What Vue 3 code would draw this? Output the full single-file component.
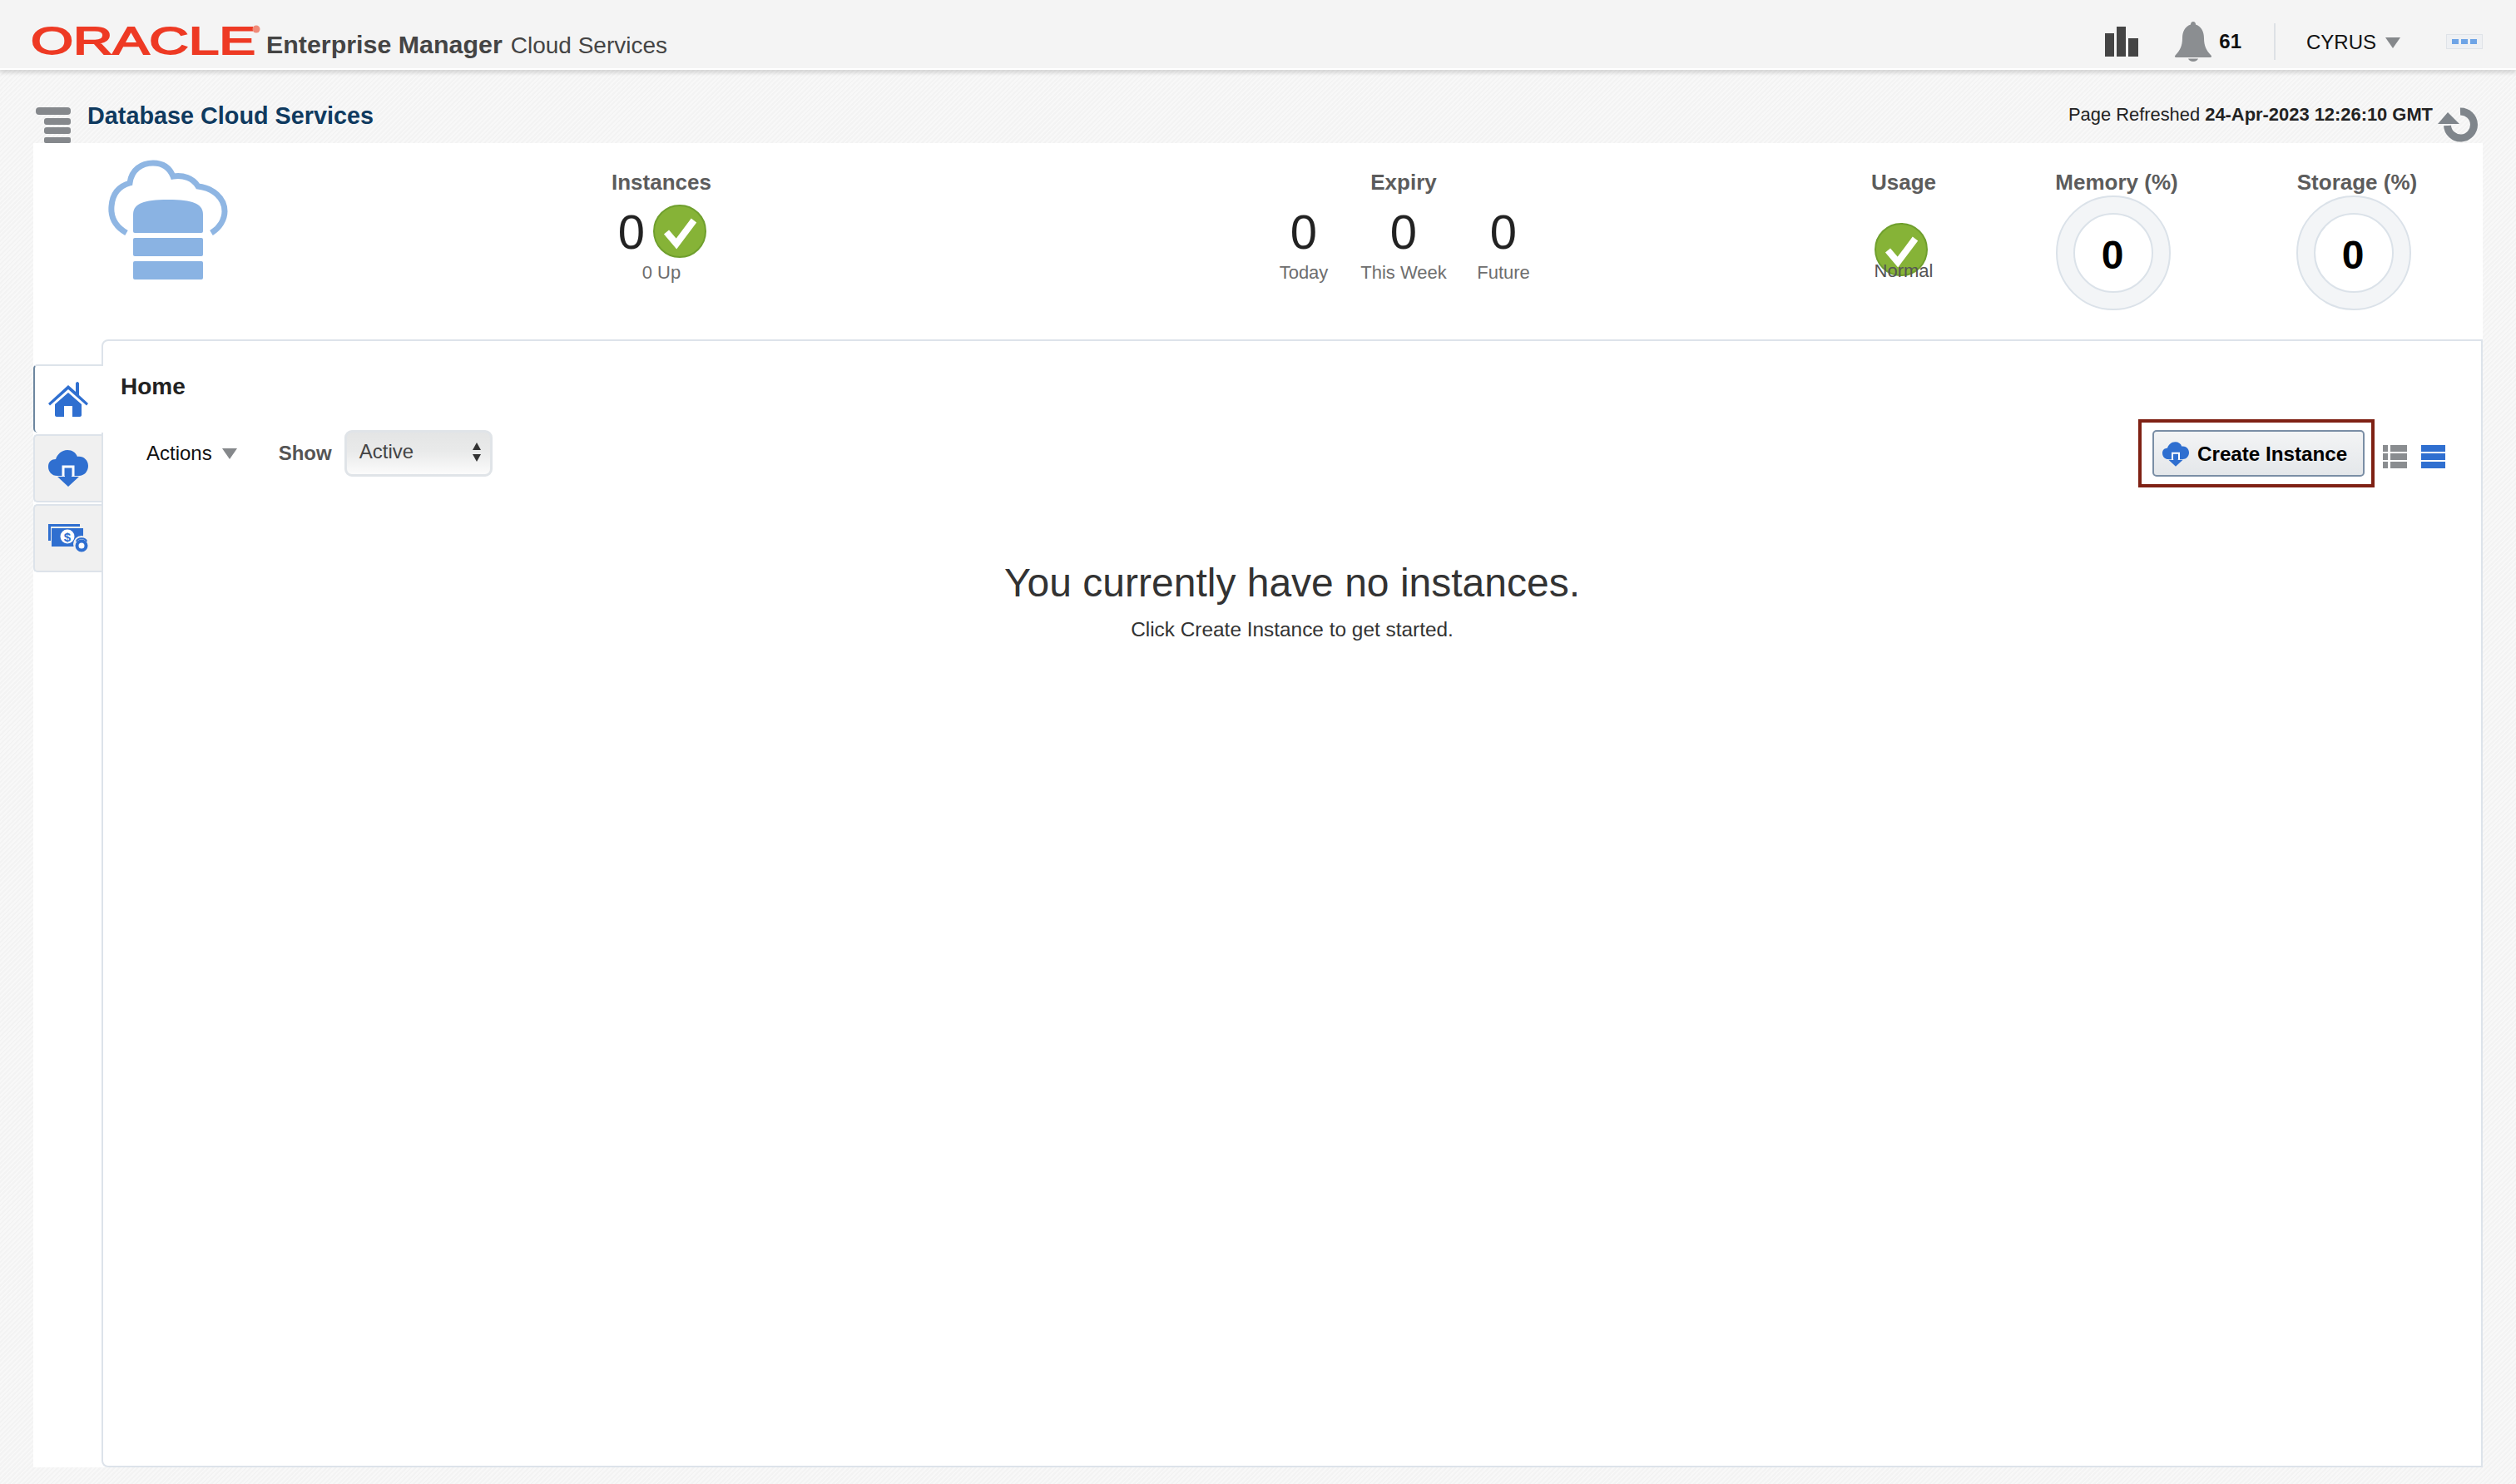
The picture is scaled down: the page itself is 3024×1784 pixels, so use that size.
<template>
  <div class="page">
    <header class="topbar">
      <svg class="oracle" width="280" height="56" viewBox="0 0 280 56" role="img" aria-label="Oracle">
        <text x="1" y="43.500" textLength="270" lengthAdjust="spacingAndGlyphs" class="oracle-word">ORACLE</text>
        <circle cx="272" cy="14" r="4.500" fill="#f08a78" />
      </svg>
      <div class="product">
        <b>Enterprise Manager</b>
        <span>Cloud Services</span>
      </div>
      <div class="top-right">
        <svg class="bars" width="40" height="36" viewBox="0 0 40 36">
          <rect x="0" y="8" width="11" height="28" />
          <rect x="14" y="0" width="11" height="36" />
          <rect x="28" y="14" width="12" height="22" />
        </svg>
        <svg class="bell" width="46" height="48" viewBox="0 0 46 48">
          <path d="M23 0c2 0 3 1.500 3 3.500C33 6 36 12 36 20c0 9 3 15 8 20 2 2 1 3-1 3H3c-2 0-3-1-1-3 5-5 8-11 8-20 0-8 3-14 10-16.500C20 1.500 21 0 23 0z" />
          <path d="M17 44.500h12c-1 2-3 3.500-6 3.500s-5-1.500-6-3.500z" />
        </svg>
        <b class="count">61</b>
        <span class="divider"></span>
        <span class="user">CYRUS</span>
        <span class="caret user-caret"></span>
        <span class="dots"><i></i><i></i><i></i></span>
      </div>
    </header>

    <div class="title-row">
      <svg class="menu" width="42" height="44" viewBox="0 0 42 44">
        <rect x="0" y="1" width="42" height="9" rx="4" />
        <rect x="10" y="14" width="32" height="8" rx="3" />
        <rect x="10" y="25" width="32" height="8" rx="3" />
        <rect x="10" y="37" width="32" height="7" rx="2" />
      </svg>
      <h1>Database Cloud Services</h1>
      <div class="refreshed">Page Refreshed <b>24-Apr-2023 12:26:10 GMT</b></div>
      <svg class="refresh" width="48" height="44" viewBox="0 0 48 44">
        <path d="M27 6A16 16 0 1 1 11.500 23" fill="none" stroke="#7f858b" stroke-width="9" />
        <path d="M0 21 12 7l14 14z" fill="#7f858b" />
      </svg>
    </div>

    <main class="panel">
      <section class="summary">
        <svg class="cloud" width="144" height="144" viewBox="0 0 144 144">
          <path d="M22 88C8 80 3 68 4 56 5 42 12 32 26 28 28 12 40 4 54 4c12 0 20 6 24 16 12-2 24 2 30 12 18 2 32 14 32 30 0 10-6 20-16 26" fill="none" stroke="#8fb6e3" stroke-width="7" />
          <path d="M30 86V66c0-12 10-18 42-18s42 6 42 18v20a2 2 0 0 1-2 2H32a2 2 0 0 1-2-2z" fill="#8ab3e3" />
          <rect x="30" y="94" width="84" height="22" rx="2" fill="#8ab3e3" />
          <rect x="30" y="122" width="84" height="22" rx="2" fill="#8ab3e3" />
        </svg>

        <div class="metric instances">
          <h3>Instances</h3>
          <div class="metric-row">
            <span class="big">0</span>
            <svg class="check" width="64" height="64" viewBox="0 0 64 64">
              <circle cx="32" cy="32" r="31" fill="#86b337" stroke="#6f9f2d" stroke-width="2" />
              <path d="M16 33l12 14 21-28" fill="none" stroke="#fff" stroke-width="8" />
            </svg>
          </div>
          <div class="sub">0 Up</div>
        </div>

        <div class="metric expiry">
          <h3>Expiry</h3>
          <div class="expiry-cols">
            <div v-for="item in expiry" :key="item">
              <div class="metric-row"><span class="big">0</span></div>
              <div class="sub">{{ item }}</div>
            </div>
          </div>
        </div>

        <div class="metric usage">
          <h3>Usage</h3>
          <svg class="check usage-check" width="64" height="64" viewBox="0 0 64 64">
            <circle cx="32" cy="32" r="31" fill="#86b337" stroke="#6f9f2d" stroke-width="2" />
            <path d="M16 33l12 14 21-28" fill="none" stroke="#fff" stroke-width="8" />
          </svg>
          <div class="sub normal">Normal</div>
        </div>

        <div v-for="g in gauges" :key="g.label" class="metric gauge" :class="g.cls">
          <h3>{{ g.label }}</h3>
          <div class="ring"><div class="ring-inner">0</div></div>
        </div>
      </section>

      <div class="workspace">
        <nav class="tabs">
          <a class="tab active">
            <svg width="48" height="42" viewBox="0 0 48 42" fill="#2f6fd0">
              <path d="M0 26 24 4l9 8V2c0-1 1-2 2-2s2 1 2 2v14l11 10-2 2.500L24 9 2 28.500z" />
              <path d="M8 27 24 13l16 14v13c0 1-1 2-2 2h-9V29H19v13h-9c-1 0-2-1-2-2z" />
            </svg>
          </a>
          <a class="tab">
            <svg width="48" height="44" viewBox="0 0 48 44" fill="#2f6fd0">
              <path d="M11 31C4 31 0 26 0 20s4-9 9-9c2-6 7-11 14-11 6 0 10 3 12 8 7-1 13 4 13 11s-5 12-11 12z" />
              <path d="M20 22h8v10h9L24 44 11 32h9z" />
              <path d="M18 32V20h12v12" fill="none" stroke="#fff" stroke-width="3" />
            </svg>
          </a>
          <a class="tab">
            <svg width="48" height="34" viewBox="0 0 48 34">
              <path d="M0 0h38v3H3v17H0z" fill="#2f6fd0" />
              <rect x="4" y="5" width="38" height="22" fill="#2f6fd0" />
              <circle cx="23" cy="15" r="8.500" fill="#fff" />
              <text x="23" y="20.500" class="dollar">$</text>
              <circle cx="40" cy="24" r="10" fill="#f0f0f0" />
              <path d="M34 21c1-5 11-5 12 0" fill="none" stroke="#2f6fd0" stroke-width="2" />
              <circle cx="40" cy="26" r="5.500" fill="#fff" stroke="#2f6fd0" stroke-width="4" />
            </svg>
          </a>
        </nav>

        <div class="card">
          <h2>Home</h2>
          <div class="toolbar">
            <span class="actions">Actions</span>
            <span class="caret actions-caret"></span>
            <label class="show">Show</label>
            <div class="select">
              <span>Active</span>
              <span class="updown"><i class="up"></i><i class="down"></i></span>
            </div>
            <div class="toolbar-right">
              <div class="highlight">
                <button class="create" type="button">
                  <svg width="32" height="30" viewBox="0 0 48 44" fill="#2f6fd0">
                    <path d="M11 31C4 31 0 26 0 20s4-9 9-9c2-6 7-11 14-11 6 0 10 3 12 8 7-1 13 4 13 11s-5 12-11 12z" />
                    <path d="M20 22h8v10h9L24 44 11 32h9z" />
                    <path d="M18 32V20h12v12" fill="none" stroke="#fff" stroke-width="3" />
                  </svg>
                  Create Instance
                </button>
              </div>
              <svg class="view" width="29" height="28" viewBox="0 0 29 28" fill="#8a8d90">
                <rect x="0" y="0" width="6" height="8" /><rect x="9" y="0" width="20" height="8" />
                <rect x="0" y="10" width="6" height="8" /><rect x="9" y="10" width="20" height="8" />
                <rect x="0" y="20" width="6" height="8" /><rect x="9" y="20" width="20" height="8" />
              </svg>
              <svg class="view" width="29" height="28" viewBox="0 0 29 28" fill="#2f6fd0">
                <rect x="0" y="0" width="29" height="8" />
                <rect x="0" y="10" width="29" height="8" />
                <rect x="0" y="20" width="29" height="8" />
              </svg>
            </div>
          </div>

          <div class="empty">
            <div class="empty-title">You currently have no instances.</div>
            <div class="empty-sub">Click Create Instance to get started.</div>
          </div>
        </div>
      </div>
    </main>
  </div>
</template>

<script setup>
const expiry = ['Today', 'This Week', 'Future'];
const gauges = [
  { label: 'Memory (%)', cls: 'memory' },
  { label: 'Storage (%)', cls: 'storage' },
];
</script>

<style>
html,
body {
  margin: 0;
  background-color: #f5f5f5;
  background-image: repeating-linear-gradient(135deg, #f3f3f3 0 2px, #f8f8f8 2px 4px);
}
</style>

<style scoped>
.page {
  height: 1784px;
  display: flex;
  flex-direction: column;
  font-family: 'Liberation Sans', Arial, sans-serif;
  color: #222;
  overflow: hidden;
}

.topbar {
  height: 82px;
  flex: none;
  display: flex;
  align-items: flex-start;
  padding: 0 40px;
  background: #f4f4f4;
  border-bottom: 2px solid #fff;
  box-shadow: 0 4px 4px rgba(0, 0, 0, 0.12);
}

.oracle {
  flex: none;
  margin: 21px 0 0 -4px;
}

.oracle-word {
  font-size: 45.500px;
  fill: #ee3a24;
  stroke: #ee3a24;
  stroke-width: 1.800px;
}

.product {
  margin-left: 4px;
  margin-top: 36px;
  color: #444;
  white-space: nowrap;
}

.product b {
  font-size: 30.400px;
  margin-right: 10px;
}

.product span {
  font-size: 28px;
}

.top-right {
  margin-left: auto;
  margin-top: 26px;
  display: flex;
  align-items: center;
}

.bars {
  fill: #444;
}

.bell {
  fill: #8b8e91;
  margin-left: 43px;
}

.count {
  font-size: 24px;
  color: #111;
  margin-left: 8px;
}

.divider {
  width: 2px;
  height: 44px;
  background: #dde1e5;
  margin-left: 39px;
}

.user {
  font-size: 24px;
  color: #111;
  margin: 2px 0 0 37px;
}

.caret {
  width: 0;
  height: 0;
  border-left: 9px solid transparent;
  border-right: 9px solid transparent;
  border-top: 13px solid #85888b;
}

.user-caret {
  margin: 2px 0 0 11px;
}

.dots {
  width: 44px;
  height: 18px;
  margin-left: 55px;
  box-sizing: border-box;
  border: 1px solid #dfe3e8;
  background: #eef0f3;
  display: flex;
  align-items: center;
  justify-content: center;
  gap: 3px;
}

.dots i {
  width: 8px;
  height: 6px;
  background: #6ea4e6;
}

.title-row {
  height: 88px;
  flex: none;
  display: flex;
  align-items: flex-start;
  padding: 0 46px 0 43px;
}

.menu {
  fill: #85888c;
  flex: none;
  margin-top: 44px;
}

h1 {
  margin: 38px 0 0 20px;
  font-size: 28.800px;
  line-height: 34px;
  font-weight: 700;
  color: #0f3a5f;
  white-space: nowrap;
}

.refreshed {
  margin: 41px 0 0 auto;
  font-size: 21.900px;
  line-height: 26px;
  color: #222;
  white-space: nowrap;
}

.refresh {
  margin: 44px 0 0 6px;
  flex: none;
}

.panel {
  height: 1592px;
  flex: none;
  margin: 0 40px;
  background: #fff;
  display: flex;
  flex-direction: column;
}

.summary {
  height: 236px;
  flex: none;
  box-sizing: border-box;
  padding-top: 32px;
  display: grid;
  grid-template-columns: 555px 400px 392px 600px 200px 202px 56px 198px 90px 200px;
}

.cloud {
  margin: -12px 0 0 90px;
}

.metric {
  display: flex;
  flex-direction: column;
  align-items: center;
  min-width: 0;
}

.instances {
  grid-column: 2;
  grid-row: 1;
}

.instances .metric-row {
  gap: 10px;
  margin-left: 2px;
}

.expiry {
  grid-column: 4;
  grid-row: 1;
}

.usage {
  grid-column: 6;
  grid-row: 1;
}

.memory {
  grid-column: 8;
  grid-row: 1;
}

.storage {
  grid-column: 10;
  grid-row: 1;
}

h3 {
  margin: 0;
  font-size: 26px;
  line-height: 30px;
  font-weight: 700;
  color: #5c5c5c;
  white-space: nowrap;
}

.metric-row {
  height: 64px;
  margin-top: 12px;
  display: flex;
  align-items: center;
  justify-content: center;
  gap: 12px;
}

.big {
  font-size: 58px;
  color: #222;
}

.sub {
  margin-top: 5px;
  font-size: 22px;
  line-height: 26px;
  color: #6e6e6e;
  white-space: nowrap;
}

.expiry-cols {
  display: grid;
  grid-template-columns: repeat(3, 120px);
  text-align: center;
}

.usage-check {
  margin: 34px 6px 0 0;
  flex: none;
}

.normal {
  margin-top: -19px;
  color: #555;
  position: relative;
}

.ring {
  width: 138px;
  height: 138px;
  margin: 1px 8px 0 0;
  box-sizing: border-box;
  border: 2px solid #dbe2e9;
  border-radius: 50%;
  background: #f3f5f7;
  display: flex;
  align-items: center;
  justify-content: center;
}

.ring-inner {
  width: 96px;
  height: 96px;
  box-sizing: border-box;
  padding: 4px 2px 0 0;
  border: 2px solid #dbe2e9;
  border-radius: 50%;
  background: #fff;
  display: flex;
  align-items: center;
  justify-content: center;
  font-size: 48px;
  font-weight: 700;
  color: #000;
}

.workspace {
  flex: 1;
  display: flex;
  min-height: 0;
}

.tabs {
  width: 82px;
  flex: none;
  padding-top: 30px;
  display: flex;
  flex-direction: column;
  gap: 2px;
  position: relative;
  z-index: 1;
}

.tab {
  height: 82px;
  width: 84px;
  box-sizing: border-box;
  display: flex;
  align-items: center;
  justify-content: center;
  padding-right: 2px;
  background: #f0f0f0;
  border: 2px solid #dde3ea;
  border-right: none;
  border-radius: 5px 0 0 5px;
}

.tab + .tab {
  width: 82px;
  padding-right: 0;
}

.tab.active {
  background: #fff;
  border-left-color: #6d87a0;
  border-bottom-width: 0;
}

.card {
  flex: 1;
  min-width: 0;
  box-sizing: border-box;
  padding: 38px 43px 0 21px;
  border: 2px solid #dde3ea;
  border-radius: 8px 0 0 8px;
}

h2 {
  margin: 0;
  font-size: 28px;
  line-height: 34px;
  font-weight: 700;
  color: #222;
}

.toolbar {
  margin-top: 22px;
  display: flex;
  align-items: center;
}

.actions {
  margin-left: 31px;
  font-size: 24px;
  color: #111;
}

.actions-caret {
  margin-left: 12px;
}

.show {
  margin-left: 50px;
  font-size: 24px;
  font-weight: 700;
  color: #555;
}

.select {
  width: 178px;
  height: 56px;
  margin-left: 15px;
  box-sizing: border-box;
  padding: 0 11px 4px 15px;
  border: 3px solid #e0e4e8;
  border-radius: 9px;
  background: linear-gradient(#e4e5e5, #e9eaea 45%, #fbfbfb);
  display: flex;
  align-items: center;
  justify-content: space-between;
  font-size: 24px;
  color: #444;
}

.updown {
  display: flex;
  flex-direction: column;
  gap: 5px;
}

.updown i {
  width: 0;
  height: 0;
  border-left: 5.500px solid transparent;
  border-right: 5.500px solid transparent;
}

.updown .up {
  border-bottom: 9px solid #333;
}

.updown .down {
  border-top: 9px solid #333;
}

.toolbar-right {
  margin-left: auto;
  display: flex;
  align-items: center;
}

.highlight {
  width: 284px;
  height: 82px;
  box-sizing: border-box;
  padding-left: 13px;
  border: 4px solid #7f2114;
  display: flex;
  align-items: center;
}

.create {
  width: 255px;
  height: 56px;
  box-sizing: border-box;
  padding: 1px 0 0 10px;
  border: 2px solid #7a8ea5;
  border-radius: 5px;
  background: linear-gradient(#f3f4f5, #e4e7ea);
  display: flex;
  align-items: center;
  gap: 10px;
  font-family: inherit;
  font-size: 24.200px;
  font-weight: 700;
  color: #000;
  white-space: nowrap;
}

.view {
  margin: 8px 0 0 10px;
  flex: none;
}

.view + .view {
  margin-left: 17px;
}

.empty {
  margin: 87px 0 0 22px;
  text-align: center;
}

.empty-title {
  font-size: 48px;
  line-height: 56px;
  color: #333;
}

.empty-sub {
  margin-top: 13px;
  font-size: 24.400px;
  line-height: 30px;
  color: #333;
}

.dollar {
  font-size: 15px;
  font-weight: 700;
  text-anchor: middle;
  fill: #2f6fd0;
}
</style>
